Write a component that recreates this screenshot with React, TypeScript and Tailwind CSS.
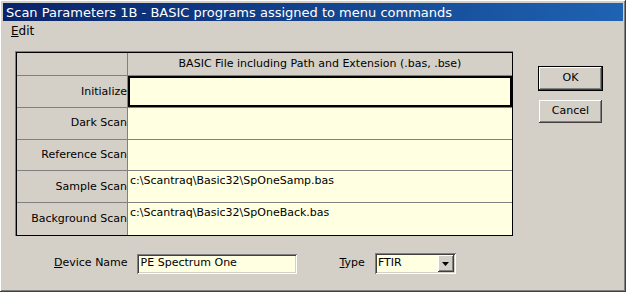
import React from "react";

const raised =
  "shadow-[inset_-1px_-1px_#404040,inset_1px_1px_#ffffff,inset_-2px_-2px_#808080,inset_2px_2px_#d4d0c8]";
const sunken =
  "shadow-[inset_1px_1px_#808080,inset_-1px_-1px_#ffffff,inset_2px_2px_#404040,inset_-2px_-2px_#d4d0c8]";

const rows = [
  { label: "Initialize", value: "" },
  { label: "Dark Scan", value: "" },
  { label: "Reference Scan", value: "" },
  { label: "Sample Scan", value: "c:\\Scantraq\\Basic32\\SpOneSamp.bas" },
  { label: "Background Scan", value: "c:\\Scantraq\\Basic32\\SpOneBack.bas" },
];

function Button({ children, isDefault }: { children: React.ReactNode; isDefault?: boolean }) {
  return (
    <div className={isDefault ? "border border-black" : "border border-transparent"}>
      <button
        className={`w-[63px] h-[23px] bg-[#d4d0c8] text-[11px] text-black flex items-center justify-center ${raised}`}
      >
        {children}
      </button>
    </div>
  );
}

export default function App() {
  return (
    <div
      className={`w-[626px] h-[292px] bg-[#d4d0c8] flex flex-col p-[3px] text-black ${raised}`}
      style={{ fontFamily: '"DejaVu Sans", Verdana, sans-serif' }}
    >
      {/* title bar */}
      <div className="h-[18px] bg-linear-to-r from-[#0a246a] to-[#1f63b2] flex items-center pl-[3px]">
        <span className="text-white text-[13px] leading-none">
          Scan Parameters 1B - BASIC programs assigned to menu commands
        </span>
      </div>

      {/* menu */}
      <div className="h-[19px] flex items-center pl-[8px] text-[12px]">
        <span>
          <span className="underline">E</span>dit
        </span>
      </div>

      <div className="flex pl-[12px] pt-[11px]">
        {/* grid */}
        <div className="w-[498px] h-[185px] border-t border-l border-[#808080] bg-black p-[1px] pr-0 pb-0">
          <div className="w-full h-full border-r border-b border-black flex flex-col bg-[#808080]">
            <div className="flex h-[23px] border-b border-[#808080]">
              <div className="w-[111px] bg-[#d4d0c8] border-r border-[#808080]" />
              <div className="flex-1 bg-[#d4d0c8] flex items-center justify-center text-[11px]">
                BASIC File including Path and Extension (.bas, .bse)
              </div>
            </div>
            {rows.map((r, i) => (
              <div
                key={r.label}
                className={`flex h-[32px] ${i < rows.length - 1 ? "border-b border-[#808080]" : ""}`}
              >
                <div className="w-[111px] bg-[#d4d0c8] border-r border-[#808080] flex items-center justify-end text-[11px] pt-[1px]">
                  {r.label}
                </div>
                <div
                  className={`flex-1 bg-[#ffffe1] text-[11px] pl-[2px] pt-[2px] ${
                    i === 0 ? "border-2 border-black" : ""
                  }`}
                >
                  {r.value}
                </div>
              </div>
            ))}
          </div>
        </div>

        {/* buttons */}
        <div className="flex flex-col gap-[8px] ml-[25px] mt-[15px]">
          <Button isDefault>OK</Button>
          <Button>Cancel</Button>
        </div>
      </div>

      {/* bottom row */}
      <div className="flex items-center mt-[17px] text-[11px]">
        <span className="ml-[51px]">
          <span className="underline">D</span>evice Name
        </span>
        <div className={`ml-[9px] w-[160px] h-[20px] bg-[#ffffe1] flex items-center pl-[4px] ${sunken}`}>
          PE Spectrum One
        </div>
        <span className="ml-[43px]">
          <span className="underline">T</span>ype
        </span>
        <div className={`ml-[10px] w-[81px] h-[21px] bg-[#ffffe1] flex items-center pl-[3px] pr-[2px] ${sunken}`}>
          <span className="flex-1">FTIR</span>
          <div className={`w-[16px] h-[17px] bg-[#d4d0c8] flex items-center justify-center ${raised}`}>
            <svg width="7" height="4" viewBox="0 0 7 4">
              <path d="M0 0h7L3.5 4z" fill="black" />
            </svg>
          </div>
        </div>
      </div>
    </div>
  );
}
